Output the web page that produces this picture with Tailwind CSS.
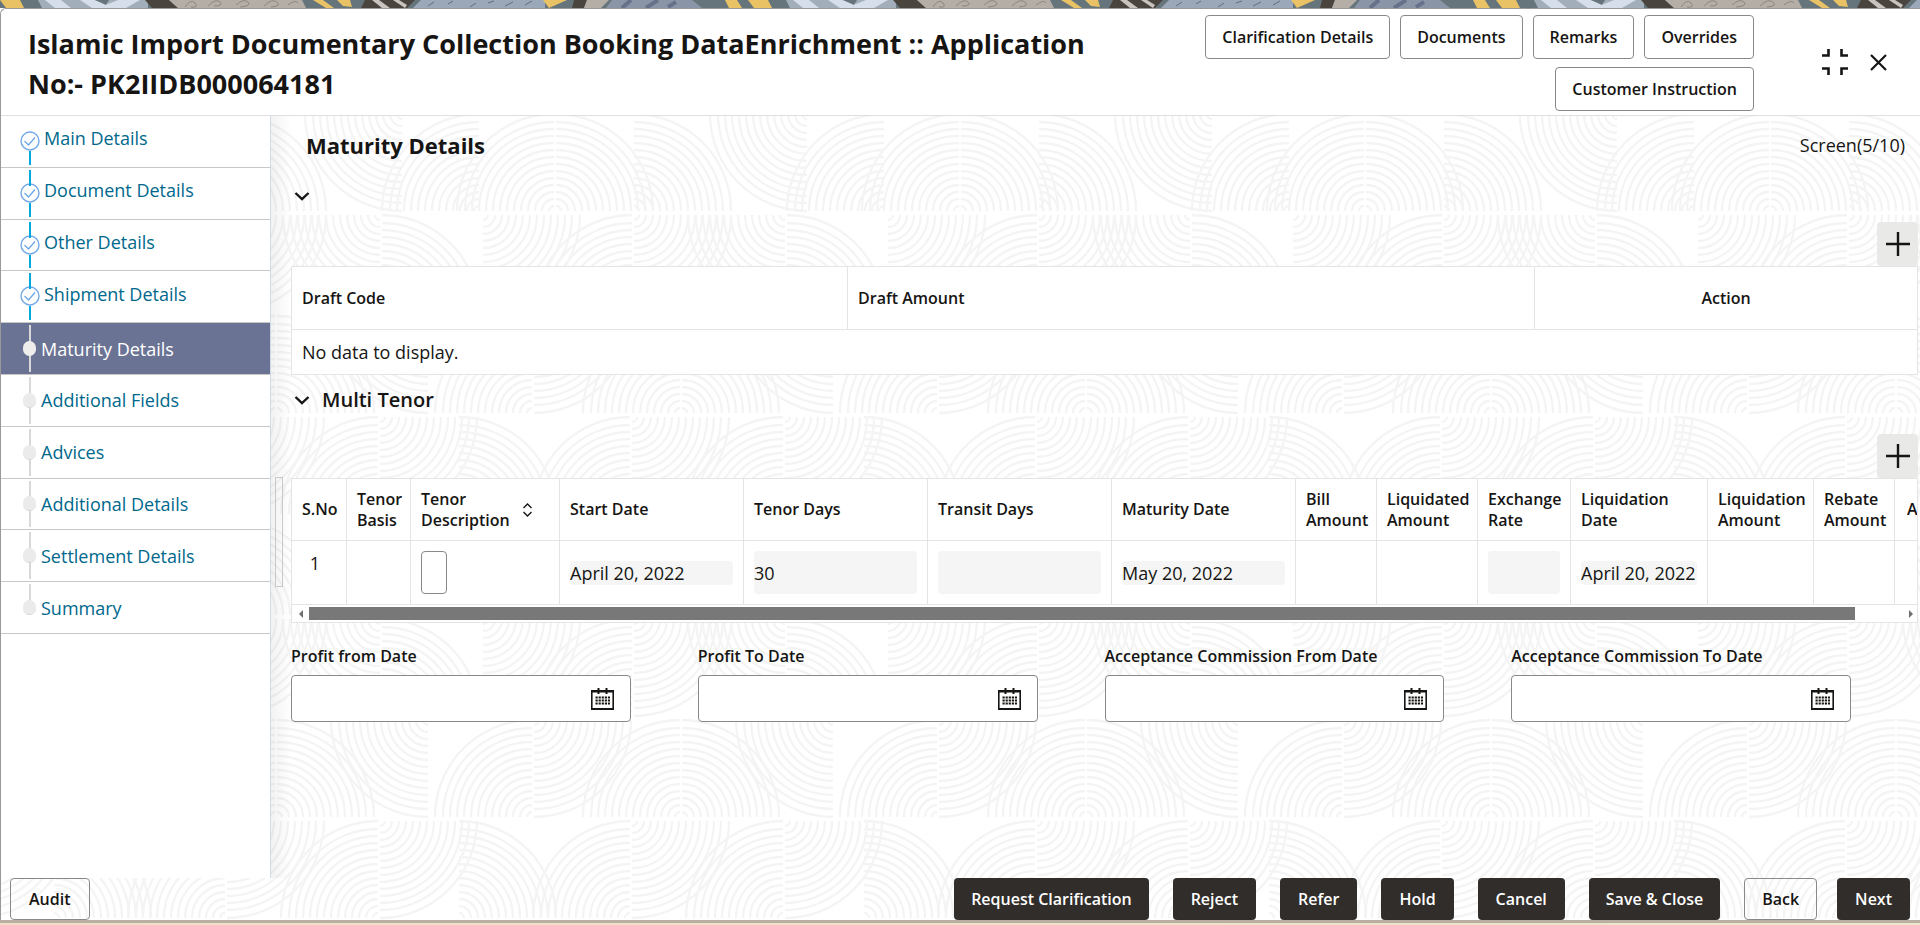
<!DOCTYPE html>
<html lang="en">
<head>
    <meta charset="UTF-8">
    <meta name="viewport" content="width=device-width, initial-scale=1.0">
    <title>Islamic Import Documentary Collection Booking</title>
    <script src="https://cdn.jsdelivr.net/npm/@tailwindcss/browser@4"></script>
</head>
<body class="h-screen flex flex-col overflow-hidden bg-white font-['Open_Sans','Noto_Sans',sans-serif] text-[#161513]">

    <!-- Shared shapes -->
    <svg class="absolute w-0 h-0" aria-hidden="true">
        <defs>
            <g id="arcs" fill="none" stroke="#f4f4f4" stroke-width="2.3">
                <path d="M5 0A5 5 0 0 1 0 5M12 0A12 12 0 0 1 0 12M19 0A19 19 0 0 1 0 19M26 0A26 26 0 0 1 0 26M33 0A33 33 0 0 1 0 33M40 0A40 40 0 0 1 0 40M47 0A47 47 0 0 1 0 47M54 0A54 54 0 0 1 0 54M61 0A61 61 0 0 1 0 61M68 0A68 68 0 0 1 0 68M75 0A75 75 0 0 1 0 75M82 0A82 82 0 0 1 0 82M89 0A89 89 0 0 1 0 89M97 0A97 97 0 0 1 0 97"/>
            </g>
            <g id="br"><use href="#arcs" transform="translate(1 99) scale(1 -1)"/></g>
            <g id="bl"><use href="#arcs" transform="translate(-1 99) scale(-1 -1)"/></g>
            <g id="tr"><use href="#arcs" transform="translate(1 2)"/></g>
            <g id="tl"><use href="#arcs" transform="translate(-1 2) scale(-1 1)"/></g>
            <g id="tile">
                <use href="#bl" x="149"/><use href="#br" x="149"/><use href="#bl" x="74"/><use href="#br" x="227"/><use href="#tl" x="402"/>
                <g transform="translate(0 101)">
                    <use href="#br" x="380"/><use href="#tr" x="76"/><use href="#bl" x="227"/><use href="#tr" x="227"/><use href="#tl" x="380"/>
                </g>
                <g transform="translate(0 202)">
                    <use href="#bl" x="275"/><use href="#br" x="275"/><use href="#tl" x="23"/><use href="#bl" x="127"/><use href="#tr" x="127"/>
                </g>
                <g transform="translate(0 303)">
                    <use href="#tr" x="225"/><use href="#bl" x="225"/><use href="#tr" x="378"/><use href="#bl" x="378"/><use href="#br" x="52"/>
                </g>
            </g>
            <pattern id="waves" width="405" height="404" patternUnits="userSpaceOnUse" y="103">
                <use href="#tile" x="-405"/><use href="#tile"/><use href="#tile" x="405"/>
            </pattern>
            <pattern id="mosaic" width="748" height="8" patternUnits="userSpaceOnUse">
                <path fill="#66747c" d="M0 0h748v8H0z"/>
                <path fill="#e8c264" d="M0 0h20l4 8H6z"/>
                <path fill="#a3aebb" d="M38 0h110v8H42z"/>
                <path fill="#d6deeb" d="M45 0h16l10 8H55zM80 0h14l14 4 10-4h22l-14 8H92z"/>
                <path fill="#66747c" d="M95 0h14l-3 5z"/>
                <path fill="#4a443e" d="M145 0h24l9 8h-26z"/>
                <path fill="#b5aea7" d="M169 0h133l4 8H178z"/>
                <path d="M185 7q6-9 10-4t-4 4M208 6q8-8 12-4t-6 4M236 5q8-7 12-3t-8 5M264 6q8-8 13-4t-6 5M288 5q8-6 10-2" stroke="#8d8680" fill="none"/>
                <path fill="#e8c264" d="M313 0h10l11 8h-8zM337 0h13l2 7-9-1z"/>
                <path fill="#4a443e" d="M365 0h50l-8 8h-46z"/>
                <path fill="#c9c4bf" d="M372 0h7l11 8h-8zM393 0h6l8 5-2 3z"/>
                <path fill="#9ba8b9" d="M421 0h124v8H413z"/>
                <path d="M428 6l6-4M448 4l5-3M470 7l6-4M488 3l6-2M505 6l8-4M525 5l7-4" stroke="#5f6c7c"/>
                <path fill="#e8c264" d="M543 0h24l-18 8z"/>
                <path fill="#4a443e" d="M574 0h13l-3 8h-12z"/>
                <path fill="#b5aea7" d="M587 0h22l-8 8h-17z"/>
                <path fill="#8b95a8" d="M612 0h80l10 8h-96z"/>
                <path d="M622 8l9-8M646 8l12-8M668 7l8-5" stroke="#66718a" stroke-width="4"/>
                <path fill="#e8c264" d="M725 0h12l5 8h-13z"/>
            </pattern>
            <g id="check">
                <circle cx="10" cy="10" r="9" fill="#fff" stroke="#71a8e8" stroke-width="1.4"/>
                <path d="M4.500 10l4 4L15 6.500" fill="none" stroke="#71a8e8" stroke-width="1.4"/>
            </g>
            <g id="chevron"><path d="M1.500 2L8 8.200 14.500 2" fill="none" stroke="#161513" stroke-width="2.4"/></g>
            <g id="calendar" fill="#161513">
                <path d="M0 2h23v20H0zM1.600 4.600v15.400h19.800V4.600z" fill-rule="evenodd"/>
                <path d="M6.500 0h2v6h-2zM14.500 0h2v6h-2z"/>
                <path d="M4.500 9.500h14.500M4.500 12.500h14.500M4.500 15.500h14.500" stroke="#161513" stroke-width="2" stroke-dasharray="2.2 0.900"/>
            </g>
        </defs>
    </svg>

    <!-- Backdrop strip -->
    <svg class="h-2 w-full shrink-0" aria-hidden="true"><rect width="100%" height="8" fill="url(#mosaic)"/></svg>

    <div class="relative flex-1 min-h-0 flex flex-col border-t border-l border-[#999] rounded-tl-md">
        <svg class="absolute inset-0 w-full h-full" aria-hidden="true"><rect width="100%" height="100%" fill="url(#waves)"/></svg>

        <!-- Header -->
        <header class="relative flex h-[107px] shrink-0 bg-white border-b border-[#dfdfdf] rounded-tl-md pl-[27px] pr-[33px]">
            <h1 class="flex-1 pt-[15px] pr-20 text-[27px] leading-10 font-bold">Islamic Import Documentary Collection Booking DataEnrichment :: Application No:- PK2IIDB000064181</h1>
            <div class="w-[560px] pt-1.5 flex flex-wrap justify-end content-start gap-x-2.5 gap-y-2">
                <button class="h-11 px-4 border border-[#8a8988] rounded font-semibold">Clarification Details</button>
                <button class="h-11 px-4 border border-[#8a8988] rounded font-semibold">Documents</button>
                <button class="h-11 px-4 border border-[#8a8988] rounded font-semibold">Remarks</button>
                <button class="h-11 px-4 border border-[#8a8988] rounded font-semibold">Overrides</button>
                <button class="h-11 px-4 border border-[#8a8988] rounded font-semibold">Customer Instruction</button>
            </div>
            <div class="flex items-center gap-[22px] pl-[68px]">
                <button aria-label="Collapse">
                    <svg width="26" height="26" fill="none" stroke="#161513" stroke-width="2.6"><path d="M0 6.500h6.500V0M19.500 0v6.500H26M0 19.500h6.500V26M26 19.500h-6.500V26"/></svg>
                </button>
                <button aria-label="Close">
                    <svg width="17" height="17" fill="none" stroke="#161513" stroke-width="2.2"><path d="M1 1l15 15M16 1L1 16"/></svg>
                </button>
            </div>
        </header>

        <div class="relative flex-1 min-h-0 flex">
            <!-- Steps -->
            <nav class="w-[270px] shrink-0 bg-white border-r border-[#cfdbe6]">
                <ul class="h-[518px] flex flex-col text-lg text-[#00688c]">
                    <li class="flex-1 border-b border-[#c9c7c3] flex pl-[19px] gap-1">
                        <span class="relative w-5 flex flex-col items-center pt-[15px]">
                            <svg class="shrink-0" width="20" height="20"><use href="#check"/></svg>
                            <i class="absolute top-[35px] bottom-0.5 w-0.5 bg-[#00a9e0]"></i>
                        </span>
                        <a href="#" class="self-center pb-1.5">Main Details</a>
                    </li>
                    <li class="flex-1 border-b border-[#c9c7c3] flex pl-[19px] gap-1">
                        <span class="relative w-5 flex flex-col items-center pt-[15px]">
                            <svg class="shrink-0" width="20" height="20"><use href="#check"/></svg>
                            <i class="absolute top-0.5 h-4 w-0.5 bg-[#00a9e0]"></i>
                            <i class="absolute top-[35px] bottom-0.5 w-0.5 bg-[#00a9e0]"></i>
                        </span>
                        <a href="#" class="self-center pb-1.5">Document Details</a>
                    </li>
                    <li class="flex-1 border-b border-[#c9c7c3] flex pl-[19px] gap-1">
                        <span class="relative w-5 flex flex-col items-center pt-[15px]">
                            <svg class="shrink-0" width="20" height="20"><use href="#check"/></svg>
                            <i class="absolute top-0.5 h-4 w-0.5 bg-[#00a9e0]"></i>
                            <i class="absolute top-[35px] bottom-0.5 w-0.5 bg-[#00a9e0]"></i>
                        </span>
                        <a href="#" class="self-center pb-1.5">Other Details</a>
                    </li>
                    <li class="flex-1 border-b border-[#c9c7c3] flex pl-[19px] gap-1">
                        <span class="relative w-5 flex flex-col items-center pt-[15px]">
                            <svg class="shrink-0" width="20" height="20"><use href="#check"/></svg>
                            <i class="absolute top-0.5 h-4 w-0.5 bg-[#00a9e0]"></i>
                            <i class="absolute top-[35px] bottom-0.5 w-0.5 bg-[#00a9e0]"></i>
                        </span>
                        <a href="#" class="self-center pb-1.5">Shipment Details</a>
                    </li>
                    <li class="flex-1 border-b border-[#c9c7c3] flex pl-[22px] gap-1 bg-[#6b7394] text-white">
                        <span class="relative w-[14px] flex items-center">
                            <i class="absolute inset-y-0.5 left-1.5 w-0.5 bg-[#d8d8d8]"></i>
                            <i class="relative w-[13px] h-[15px] rounded-full bg-[#efeeed]"></i>
                        </span>
                        <a href="#" class="self-center" aria-current="step">Maturity Details</a>
                    </li>
                    <li class="flex-1 border-b border-[#c9c7c3] flex pl-[22px] gap-1">
                        <span class="relative w-[14px] flex items-center">
                            <i class="absolute inset-y-0.5 left-1.5 w-0.5 bg-[#d8d8d8]"></i>
                            <i class="relative w-[13px] h-[15px] rounded-full bg-[#ebebeb] border-b border-[#d5d5d5]"></i>
                        </span>
                        <a href="#" class="self-center">Additional Fields</a>
                    </li>
                    <li class="flex-1 border-b border-[#c9c7c3] flex pl-[22px] gap-1">
                        <span class="relative w-[14px] flex items-center">
                            <i class="absolute inset-y-0.5 left-1.5 w-0.5 bg-[#d8d8d8]"></i>
                            <i class="relative w-[13px] h-[15px] rounded-full bg-[#ebebeb] border-b border-[#d5d5d5]"></i>
                        </span>
                        <a href="#" class="self-center">Advices</a>
                    </li>
                    <li class="flex-1 border-b border-[#c9c7c3] flex pl-[22px] gap-1">
                        <span class="relative w-[14px] flex items-center">
                            <i class="absolute inset-y-0.5 left-1.5 w-0.5 bg-[#d8d8d8]"></i>
                            <i class="relative w-[13px] h-[15px] rounded-full bg-[#ebebeb] border-b border-[#d5d5d5]"></i>
                        </span>
                        <a href="#" class="self-center">Additional Details</a>
                    </li>
                    <li class="flex-1 border-b border-[#c9c7c3] flex pl-[22px] gap-1">
                        <span class="relative w-[14px] flex items-center">
                            <i class="absolute inset-y-0.5 left-1.5 w-0.5 bg-[#d8d8d8]"></i>
                            <i class="relative w-[13px] h-[15px] rounded-full bg-[#ebebeb] border-b border-[#d5d5d5]"></i>
                        </span>
                        <a href="#" class="self-center">Settlement Details</a>
                    </li>
                    <li class="flex-1 border-b border-[#c9c7c3] flex pl-[22px] gap-1">
                        <span class="relative w-[14px] flex items-center">
                            <i class="absolute top-0.5 h-6 left-1.5 w-0.5 bg-[#d8d8d8]"></i>
                            <i class="relative w-[13px] h-[15px] rounded-full bg-[#ebebeb] border-b border-[#d5d5d5]"></i>
                        </span>
                        <a href="#" class="self-center">Summary</a>
                    </li>
                </ul>
            </nav>

            <!-- Resize handle -->
            <div class="w-5 shrink-0 pl-1 pt-[361px] bg-linear-to-r from-black/5 to-transparent">
                <div class="w-2 h-[110px] border border-[#c9c9c9]"></div>
            </div>

            <!-- Content -->
            <main class="flex-1 min-w-0 pr-0.5">
                <div class="h-[58px] flex items-center justify-between pl-[15px] pr-[13px]">
                    <h2 class="text-[22px] font-bold">Maturity Details</h2>
                    <span class="text-lg">Screen(5/10)</span>
                </div>
                <div class="h-12 pl-[3px] pt-[17px]">
                    <button class="block" aria-label="Toggle drafts"><svg width="16" height="10"><use href="#chevron"/></svg></button>
                </div>
                <div class="flex justify-end">
                    <button class="w-[41px] h-11 flex items-center justify-center rounded bg-[#e9e9e8]" aria-label="Add draft">
                        <svg width="24" height="24" stroke="#161513" stroke-width="2.4"><path d="M0 12h24M12 0v24"/></svg>
                    </button>
                </div>
                <table class="w-full table-fixed border-collapse bg-white">
                    <thead>
                        <tr class="h-[63px] text-left">
                            <th class="w-[556px] border border-[#e4e4e4] px-2.5 font-semibold">Draft Code</th>
                            <th class="border border-[#e4e4e4] px-2.5 font-semibold">Draft Amount</th>
                            <th class="w-[383px] border border-[#e4e4e4] px-2.5 font-semibold text-center">Action</th>
                        </tr>
                    </thead>
                    <tbody>
                        <tr class="h-[45px]">
                            <td colspan="3" class="border border-[#e4e4e4] px-2.5 text-lg">No data to display.</td>
                        </tr>
                    </tbody>
                </table>
                <div class="h-[59px] pl-[3px] pt-[11px]">
                    <button class="flex items-center gap-3 text-xl font-semibold">
                        <svg width="16" height="10"><use href="#chevron"/></svg>
                        Multi Tenor
                    </button>
                </div>
                <div class="flex justify-end">
                    <button class="w-[41px] h-11 flex items-center justify-center rounded bg-[#e9e9e8]" aria-label="Add tenor">
                        <svg width="24" height="24" stroke="#161513" stroke-width="2.4"><path d="M0 12h24M12 0v24"/></svg>
                    </button>
                </div>
                <div class="overflow-hidden bg-white border-b border-r border-[#e4e4e4]">
                    <table class="w-[1725px] table-fixed border-collapse leading-[21px]">
                        <thead>
                            <tr class="h-[62px] text-left">
                                <th class="w-[55px] border border-[#e4e4e4] px-2.5 font-semibold">S.No</th>
                                <th class="w-16 border border-[#e4e4e4] px-2.5 font-semibold">Tenor Basis</th>
                                <th class="w-[149px] border border-[#e4e4e4] px-2.5 font-semibold">
                                    <div class="flex items-center justify-between pr-4">
                                        Tenor<br>Description
                                        <svg width="11" height="14" fill="none" stroke="#161513" stroke-width="1.4"><path d="M1.500 5l4-4 4 4M1.500 9l4 4 4-4"/></svg>
                                    </div>
                                </th>
                                <th class="w-[184px] border border-[#e4e4e4] px-2.5 font-semibold">Start Date</th>
                                <th class="w-[184px] border border-[#e4e4e4] px-2.5 font-semibold">Tenor Days</th>
                                <th class="w-[184px] border border-[#e4e4e4] px-2.5 font-semibold">Transit Days</th>
                                <th class="w-[184px] border border-[#e4e4e4] px-2.5 font-semibold">Maturity Date</th>
                                <th class="w-[81px] border border-[#e4e4e4] px-2.5 font-semibold">Bill Amount</th>
                                <th class="w-[101px] border border-[#e4e4e4] px-2.5 font-semibold">Liquidated Amount</th>
                                <th class="w-[93px] border border-[#e4e4e4] px-2.5 font-semibold">Exchange Rate</th>
                                <th class="w-[137px] border border-[#e4e4e4] px-2.5 font-semibold">Liquidation Date</th>
                                <th class="w-[106px] border border-[#e4e4e4] px-2.5 font-semibold">Liquidation Amount</th>
                                <th class="w-[81px] border border-[#e4e4e4] px-2.5 font-semibold">Rebate Amount</th>
                                <th class="border border-[#e4e4e4] pl-3 font-semibold">Action</th>
                            </tr>
                        </thead>
                        <tbody>
                            <tr class="h-16 text-lg">
                                <td class="border border-[#e4e4e4] text-center align-top pt-2 pr-2">1</td>
                                <td class="border border-[#e4e4e4]"></td>
                                <td class="border border-[#e4e4e4] px-2.5"><input class="block w-[26px] h-[43px] border border-[#8a8988] rounded" aria-label="Tenor description"></td>
                                <td class="border border-[#e4e4e4] px-2.5"><input class="block w-full h-6 rounded bg-[#f5f5f5]" value="April 20, 2022" readonly aria-label="Start date"></td>
                                <td class="border border-[#e4e4e4] px-2.5"><input class="block w-full h-[43px] rounded bg-[#f5f5f5]" value="30" readonly aria-label="Tenor days"></td>
                                <td class="border border-[#e4e4e4] px-2.5"><input class="block w-full h-[43px] rounded bg-[#f5f5f5]" readonly aria-label="Transit days"></td>
                                <td class="border border-[#e4e4e4] px-2.5"><input class="block w-full h-6 rounded bg-[#f5f5f5]" value="May 20, 2022" readonly aria-label="Maturity date"></td>
                                <td class="border border-[#e4e4e4]"></td>
                                <td class="border border-[#e4e4e4]"></td>
                                <td class="border border-[#e4e4e4] px-2.5"><input class="block w-full h-[43px] rounded bg-[#f5f5f5]" readonly aria-label="Exchange rate"></td>
                                <td class="border border-[#e4e4e4] px-2.5"><input class="block w-full h-6 rounded bg-[#f5f5f5]" value="April 20, 2022" readonly aria-label="Liquidation date"></td>
                                <td class="border border-[#e4e4e4]"></td>
                                <td class="border border-[#e4e4e4]"></td>
                                <td class="border border-[#e4e4e4]"></td>
                            </tr>
                        </tbody>
                    </table>
                    <!-- Scrollbar -->
                    <div class="h-[17px] flex items-center pl-[7px] pr-1 border-l border-[#e4e4e4]">
                        <svg width="4" height="8" fill="#6f6f6f"><path d="M4 0v8L0 4z"/></svg>
                        <div class="flex-1 px-1.5"><div class="w-[97%] h-[13px] bg-[#787878]"></div></div>
                        <svg width="4" height="8" fill="#6f6f6f"><path d="M0 0v8l4-4z"/></svg>
                    </div>
                </div>
                <div class="grid grid-cols-4 pt-[21px]">
                    <div class="pr-[67px]">
                        <label for="profitFrom" class="block mb-[7px] font-semibold">Profit from Date</label>
                        <div class="h-[47px] flex items-center bg-white border border-[#8a8988] rounded pr-4">
                            <input id="profitFrom" class="flex-1 min-w-0 h-full px-3 text-lg outline-none">
                            <button aria-label="Pick date"><svg width="23" height="22"><use href="#calendar"/></svg></button>
                        </div>
                    </div>
                    <div class="pr-[67px]">
                        <label for="profitTo" class="block mb-[7px] font-semibold">Profit To Date</label>
                        <div class="h-[47px] flex items-center bg-white border border-[#8a8988] rounded pr-4">
                            <input id="profitTo" class="flex-1 min-w-0 h-full px-3 text-lg outline-none">
                            <button aria-label="Pick date"><svg width="23" height="22"><use href="#calendar"/></svg></button>
                        </div>
                    </div>
                    <div class="pr-[67px]">
                        <label for="commissionFrom" class="block mb-[7px] font-semibold">Acceptance Commission From Date</label>
                        <div class="h-[47px] flex items-center bg-white border border-[#8a8988] rounded pr-4">
                            <input id="commissionFrom" class="flex-1 min-w-0 h-full px-3 text-lg outline-none">
                            <button aria-label="Pick date"><svg width="23" height="22"><use href="#calendar"/></svg></button>
                        </div>
                    </div>
                    <div class="pr-[67px]">
                        <label for="commissionTo" class="block mb-[7px] font-semibold">Acceptance Commission To Date</label>
                        <div class="h-[47px] flex items-center bg-white border border-[#8a8988] rounded pr-4">
                            <input id="commissionTo" class="flex-1 min-w-0 h-full px-3 text-lg outline-none">
                            <button aria-label="Pick date"><svg width="23" height="22"><use href="#calendar"/></svg></button>
                        </div>
                    </div>
                </div>
            </main>
        </div>

        <!-- Footer -->
        <footer class="relative h-[42px] shrink-0 flex items-stretch gap-6 pl-[9px] pr-2.5 font-semibold">
            <button class="px-[18px] border border-[#8a8988] rounded mr-auto">Audit</button>
            <button class="px-[17px] rounded bg-[#312d2a] text-white">Request Clarification</button>
            <button class="px-[18px] rounded bg-[#312d2a] text-white">Reject</button>
            <button class="px-[18px] rounded bg-[#312d2a] text-white">Refer</button>
            <button class="px-[18px] rounded bg-[#312d2a] text-white">Hold</button>
            <button class="px-[18px] rounded bg-[#312d2a] text-white">Cancel</button>
            <button class="px-[17px] rounded bg-[#312d2a] text-white">Save &amp; Close</button>
            <div class="flex gap-5">
                <button class="px-[17px] border border-[#8a8988] rounded">Back</button>
                <button class="px-[18px] rounded bg-[#312d2a] text-white">Next</button>
            </div>
        </footer>
    </div>
    <div class="h-[5px] shrink-0 border-t-3 border-[#b9b0a3] bg-linear-to-r from-[#f0dfc6] to-[#ece6c8]"></div>
</body>
</html>
